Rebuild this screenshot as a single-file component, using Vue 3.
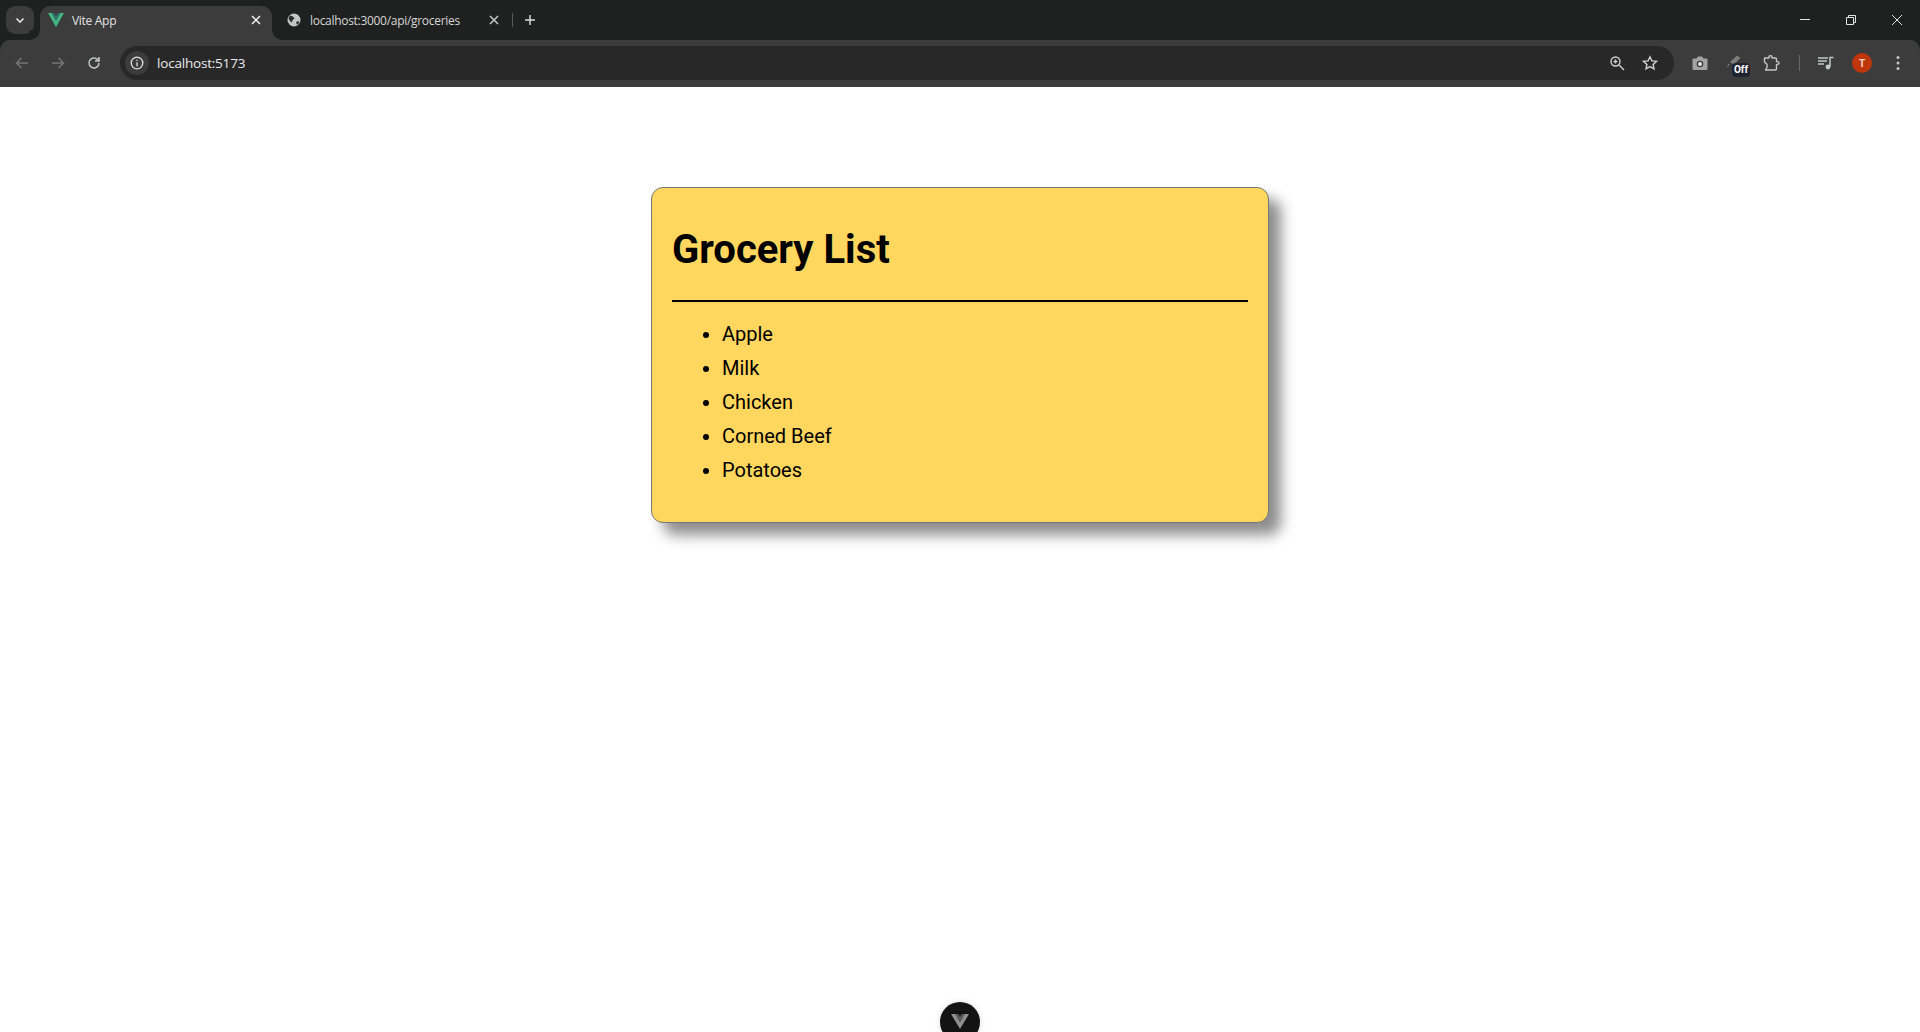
<script setup>
const groceries = ['Apple', 'Milk', 'Chicken', 'Corned Beef', 'Potatoes']
</script>

<template>
  <div class="browser">
    <div class="tabstrip">
      <div class="tab-search">
        <svg width="12" height="12" viewBox="0 0 12 12"><path d="M2.500 4.500 6 8l3.500-3.500" fill="none" stroke="#e3e3e3" stroke-width="1.600"/></svg>
      </div>
      <div class="tab active">
        <svg class="favicon" width="16" height="14" viewBox="0 0 16 14">
          <path d="M0 0h3.800L8 7.400 12.200 0H16L8 14z" fill="#41b883"/>
          <path d="M3.800 0h2.300L8 3.300 9.900 0h2.300L8 7.400z" fill="#2f6f66"/>
        </svg>
        <span class="tab-title">Vite App</span>
        <svg width="10" height="10" viewBox="0 0 10 10"><path d="M1 1l8 8M9 1 1 9" stroke="#f0f0f0" stroke-width="1.500"/></svg>
      </div>
      <div class="tab">
        <svg class="favicon" width="16" height="16" viewBox="0 0 16 16">
          <circle cx="8" cy="8" r="6.500" fill="#c4c7c5"/>
          <path d="M4 3.500l3 1 1.500 2-2 1.500-.5 2.500-2-1.500-1.500-2.500zM10 10l2.500-1 .5 2-2 2z" fill="#2a2b2b"/>
        </svg>
        <span class="tab-title">localhost:3000/api/groceries</span>
        <svg width="10" height="10" viewBox="0 0 10 10"><path d="M1 1l8 8M9 1 1 9" stroke="#c8c8c8" stroke-width="1.500"/></svg>
      </div>
      <div class="tab-sep"></div>
      <svg class="new-tab" width="12" height="12" viewBox="0 0 12 12"><path d="M6 1v10M1 6h10" stroke="#d8d8d8" stroke-width="1.500"/></svg>
      <div class="window-controls">
        <div class="win-btn"><svg width="12" height="12" viewBox="0 0 12 12"><path d="M1 5.500h10" stroke="#e3e3e3" stroke-width="1"/></svg></div>
        <div class="win-btn"><svg width="12" height="12" viewBox="0 0 12 12"><path d="M1.500 3.500h7v7h-7zM3.500 3.500v-2h7v7h-2" fill="none" stroke="#e3e3e3" stroke-width="1"/></svg></div>
        <div class="win-btn"><svg width="12" height="12" viewBox="0 0 12 12"><path d="M1 1l10 10M11 1 1 11" stroke="#e3e3e3" stroke-width="1"/></svg></div>
      </div>
    </div>

    <div class="toolbar">
      <div class="cell"><svg width="16" height="16" viewBox="0 0 16 16"><path d="M14 8H3M7.500 3 2.500 8l5 5" fill="none" stroke="#757575" stroke-width="1.500"/></svg></div>
      <div class="cell"><svg width="16" height="16" viewBox="0 0 16 16"><path d="M2 8h11M8.500 3l5 5-5 5" fill="none" stroke="#757575" stroke-width="1.500"/></svg></div>
      <div class="cell"><svg width="16" height="16" viewBox="0 0 16 16"><path d="M13 8a5 5 0 1 1-1.500-3.600L13 6M13 2v4H9" fill="none" stroke="#c4c7c5" stroke-width="1.500"/></svg></div>
      <div class="omnibox">
        <div class="site-info">
          <svg width="14" height="14" viewBox="0 0 14 14"><circle cx="7" cy="7" r="5.800" fill="none" stroke="#e3e3e3" stroke-width="1.300"/><path d="M7 6.200v4M7 3.800v1.300" stroke="#e3e3e3" stroke-width="1.300"/></svg>
        </div>
        <span class="url">localhost:5173</span>
        <svg class="omni-icon" width="16" height="16" viewBox="0 0 16 16"><circle cx="6.500" cy="6.500" r="4.500" fill="none" stroke="#d0d0d0" stroke-width="1.400"/><path d="M10 10l5 5M4.500 6.500h4M6.500 4.500v4" stroke="#d0d0d0" stroke-width="1.400"/></svg>
        <svg class="omni-icon" width="16" height="16" viewBox="0 0 16 16"><path d="M8 1.800l1.900 4.100 4.500.5-3.300 3 .9 4.400L8 11.600l-4 2.200.9-4.400-3.300-3 4.500-.5z" fill="none" stroke="#d0d0d0" stroke-width="1.400"/></svg>
      </div>
      <div class="extensions">
        <div class="cell"><svg width="16" height="14" viewBox="0 0 16 14"><path d="M1.500 2.500h3L6 .5h4l1.500 2h3q1 0 1 1V13q0 1-1 1h-13q-1 0-1-1V3.500q0-1 1-1z" fill="#a3a3a3"/><circle cx="8" cy="8" r="3.300" fill="#3c3c3c"/><circle cx="8" cy="8" r="1.900" fill="#eee"/></svg></div>
        <div class="cell ext-off">
          <svg class="pen" width="16" height="14" viewBox="0 0 16 14"><path d="M4 8l7-6.500 3.500 2.500-7 6.500z" fill="#7d7d7d"/><path d="M3 10l-1.500 3" stroke="#7d7d7d" stroke-width="1.500" stroke-dasharray="1.500 1"/></svg>
          <span class="off-badge">Off</span>
        </div>
        <div class="cell"><svg width="18" height="16" viewBox="0 0 18 16"><path d="M1.500 3h4.500V1.800q0-1 1.200-1h.6q1.200 0 1.200 1V3h3.500q1 0 1 1v2.600h1q1.500 0 1.500 1.400t-1.500 1.400h-1V14q0 1-1 1H2.500l1.700-3-.2-2.800L1.500 7z" fill="none" stroke="#c4c7c5" stroke-width="1.400" stroke-linejoin="round"/></svg></div>
        <div class="cell-narrow"><div class="toolbar-sep"></div></div>
        <div class="cell"><svg width="16" height="14" viewBox="0 0 16 14"><path d="M0 2h10M0 5h9M0 8h6" stroke="#c4c7c5" stroke-width="1.400"/><path d="M12 11V1.500h3.500" stroke="#c4c7c5" stroke-width="1.500" fill="none"/><circle cx="10" cy="11" r="2.400" fill="#c4c7c5"/></svg></div>
        <div class="cell"><div class="avatar">T</div></div>
        <div class="cell"><svg width="4" height="16" viewBox="0 0 4 16"><circle cx="2" cy="2.500" r="1.500" fill="#c4c7c5"/><circle cx="2" cy="8" r="1.500" fill="#c4c7c5"/><circle cx="2" cy="13.500" r="1.500" fill="#c4c7c5"/></svg></div>
      </div>
    </div>

    <main class="page">
      <div class="card">
        <h1>Grocery List</h1>
        <hr />
        <ul>
          <li v-for="item in groceries" :key="item">{{ item }}</li>
        </ul>
      </div>
    </main>

    <div class="devtools">
      <svg width="18" height="15" viewBox="0 0 18 15">
        <path d="M0 0h4.500L9 8 13.500 0H18L9 15z" fill="#8f8f8f"/>
        <path d="M4.500 0h3L9 2.700 10.500 0h3L9 8z" fill="#5a5a5a"/>
      </svg>
    </div>
  </div>
</template>

<style>
html,
body {
  margin: 0;
  background: #fff;
}
</style>

<style scoped>
.browser {
  height: 1032px;
  display: flex;
  flex-direction: column;
  overflow: hidden;
  position: relative;
  background: #1f2120;
  font-family: Roboto, "Liberation Sans", sans-serif;
}

.tabstrip {
  height: 40px;
  flex: none;
  display: flex;
  align-items: stretch;
  padding: 6px 0 0 6px;
  box-sizing: border-box;
  color: #e3e3e3;
}

.tab-search {
  width: 28px;
  height: 28px;
  border-radius: 9px;
  background: #3c3c3c;
  display: flex;
  align-items: center;
  justify-content: center;
}

.tab {
  width: 240px;
  height: 34px;
  padding: 0 13px 6px 14px;
  box-sizing: border-box;
  display: flex;
  align-items: center;
  font-family: "Open Sans", "Liberation Sans", sans-serif;
  font-size: 12px;
  letter-spacing: -0.3px;
  color: #d6d6d6;
}

.tab.active {
  position: relative;
  width: 232px;
  margin-left: 6px;
  padding: 0 11px 6px 8px;
  border-radius: 10px 10px 0 0;
  background: #3c3c3c;
  color: #e3e3e3;
}

/* the little curves where the active tab runs into the toolbar */
.tab.active::before,
.tab.active::after {
  content: "";
  position: absolute;
  bottom: 0;
  width: 10px;
  height: 10px;
}

.tab.active::before {
  left: -10px;
  background: radial-gradient(circle at 0 0, #1f2120 9.500px, #3c3c3c 10px);
}

.tab.active::after {
  right: -10px;
  background: radial-gradient(circle at 100% 0, #1f2120 9.500px, #3c3c3c 10px);
}

.tab-title {
  flex: 1;
  margin-left: 8px;
}

.tab-sep {
  width: 1px;
  height: 14px;
  margin: 7px 0 0 0;
  background: #5a5a5a;
}

.new-tab {
  margin: 8px 0 0 11px;
}

.window-controls {
  margin: -6px 0 0 auto;
  display: flex;
}

.win-btn {
  width: 46px;
  height: 40px;
  display: flex;
  align-items: center;
  justify-content: center;
}

.toolbar {
  height: 47px;
  flex: none;
  display: flex;
  align-items: center;
  padding: 0 4px 1px;
  background: #3c3c3c;
  border-radius: 10px 10px 0 0;
  box-sizing: border-box;
}

.cell {
  width: 36px;
  height: 34px;
  flex: none;
  display: flex;
  align-items: center;
  justify-content: center;
}

.omnibox {
  width: 1554px;
  height: 34px;
  flex: none;
  margin-left: 8px;
  padding: 0 16px 0 5px;
  box-sizing: border-box;
  display: flex;
  align-items: center;
  border-radius: 17px;
  background: #282828;
}

.site-info {
  width: 24px;
  height: 24px;
  border-radius: 50%;
  background: #3c3c3c;
  display: flex;
  align-items: center;
  justify-content: center;
}

.url {
  flex: 1;
  margin-left: 8px;
  font-family: "Open Sans", "Liberation Sans", sans-serif;
  font-size: 13.500px;
  letter-spacing: -0.2px;
  color: #e8eaed;
}

.omni-icon {
  margin-left: 17px;
}

.extensions {
  margin-left: 8px;
  display: flex;
  align-items: center;
}

.ext-off {
  position: relative;
}

.pen {
  margin: -4px 4px 0 0;
}

.off-badge {
  position: absolute;
  left: 14px;
  top: 17px;
  width: 18px;
  height: 14px;
  border-radius: 4px;
  background: #1f2430;
  color: #fff;
  font-size: 10px;
  font-weight: 700;
  line-height: 14px;
  text-align: center;
}

.cell-narrow {
  width: 18px;
  display: flex;
  justify-content: center;
}

.toolbar-sep {
  width: 1px;
  height: 16px;
  background: #666;
}

.avatar {
  width: 20px;
  height: 20px;
  border-radius: 50%;
  background: #bf360c;
  color: #f5d5c8;
  font-size: 10px;
  font-weight: 700;
  display: flex;
  align-items: center;
  justify-content: center;
}

.page {
  flex: 1;
  background: #fff;
  display: flex;
  flex-direction: column;
  align-items: center;
}

.card {
  width: 618px;
  margin-top: 100px;
  padding: 0 20px;
  box-sizing: border-box;
  border: 1px solid #777;
  border-radius: 12px;
  background: #ffd65e;
  box-shadow: 12px 12px 14px rgba(0, 0, 0, 0.45);
  color: #000;
}

h1 {
  margin: 38px 0 27px;
  font-size: 40px;
  line-height: 47px;
  font-weight: 700;
}

hr {
  margin: 0;
  border: 0;
  border-top: 2px solid #000;
}

ul {
  margin: 15px 0 35px;
  padding-left: 50px;
  font-size: 20px;
  line-height: 34px;
}

.devtools {
  position: absolute;
  left: 940px;
  top: 1002px;
  width: 40px;
  height: 40px;
  border-radius: 50%;
  background: #131313;
  box-shadow: 0 0 6px rgba(0, 0, 0, 0.15);
  display: flex;
  align-items: flex-start;
  justify-content: center;
  padding-top: 12px;
  box-sizing: border-box;
}
</style>
